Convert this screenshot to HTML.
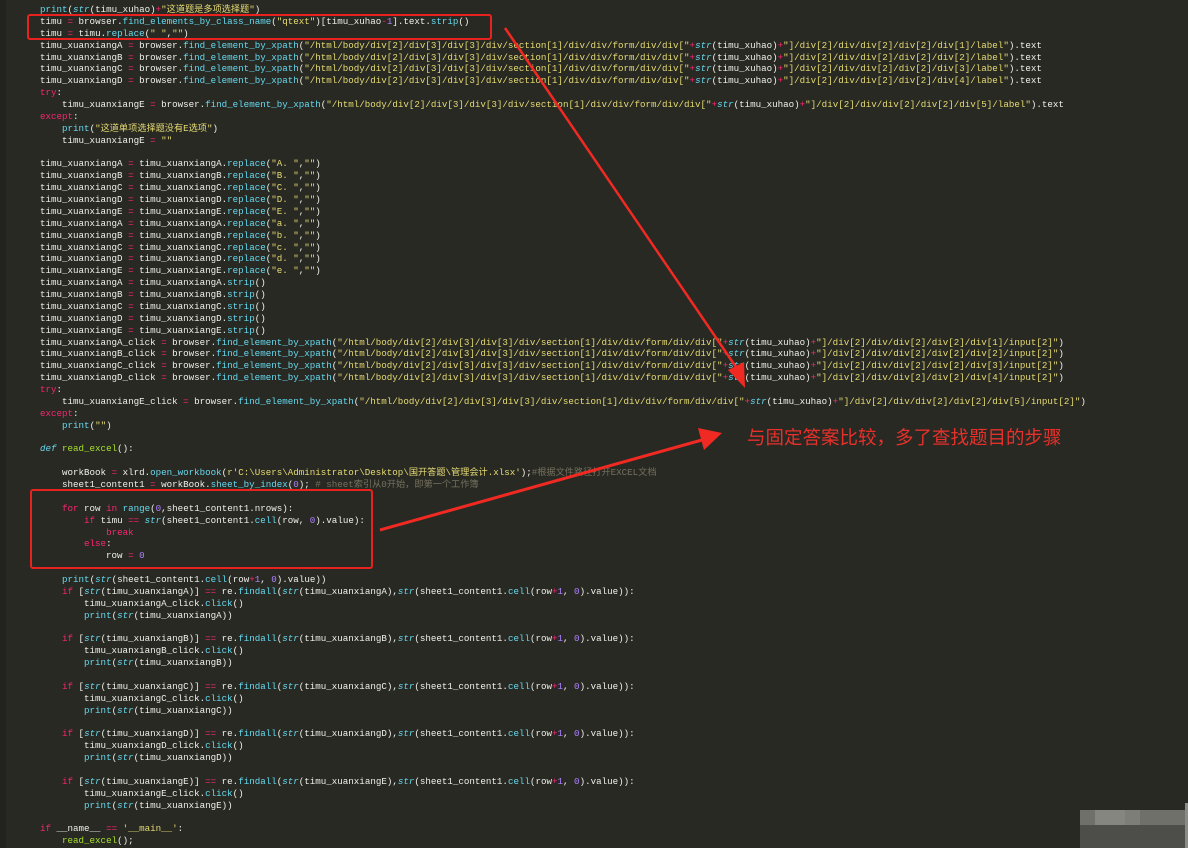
<!DOCTYPE html>
<html><head><meta charset="utf-8"><style>
html,body{margin:0;padding:0;background:#282923;width:1188px;height:848px;overflow:hidden;position:relative}
pre{position:absolute;left:40px;top:4px;margin:0;font-family:"Liberation Mono","Noto Sans CJK SC",monospace;font-size:9.18px;line-height:11.88px;color:#f0f0ea;white-space:pre}
.k{color:#f92672}.f{color:#66d9ef}.s{color:#e6db74}.n{color:#ae81ff}.b{color:#66d9ef;font-style:italic}.g{color:#a6e22e}.c{color:#75715e}
.box{position:absolute;border:2px solid #e8231f;border-radius:3px}
.note{position:absolute;left:747px;top:424px;font-family:"Noto Sans CJK SC",sans-serif;font-size:18.5px;color:#e8302b;white-space:nowrap}
.gut{position:absolute;left:0;top:0;width:6px;height:848px;background:#222320}
</style></head><body>
<div class="gut"></div>
<pre><span class="f">print</span>(<span class="b">str</span>(timu_xuhao)<span class="k">+</span><span class="s">"这道题是多项选择题"</span>)
timu <span class="k">=</span> browser.<span class="f">find_elements_by_class_name</span>(<span class="s">"qtext"</span>)[timu_xuhao<span class="k">-</span><span class="n">1</span>].text.<span class="f">strip</span>()
timu <span class="k">=</span> timu.<span class="f">replace</span>(<span class="s">" "</span>,<span class="s">""</span>)
timu_xuanxiangA <span class="k">=</span> browser.<span class="f">find_element_by_xpath</span>(<span class="s">"/html/body/div[2]/div[3]/div[3]/div/section[1]/div/div/form/div/div["</span><span class="k">+</span><span class="b">str</span>(timu_xuhao)<span class="k">+</span><span class="s">"]/div[2]/div/div[2]/div[2]/div[1]/label"</span>).text
timu_xuanxiangB <span class="k">=</span> browser.<span class="f">find_element_by_xpath</span>(<span class="s">"/html/body/div[2]/div[3]/div[3]/div/section[1]/div/div/form/div/div["</span><span class="k">+</span><span class="b">str</span>(timu_xuhao)<span class="k">+</span><span class="s">"]/div[2]/div/div[2]/div[2]/div[2]/label"</span>).text
timu_xuanxiangC <span class="k">=</span> browser.<span class="f">find_element_by_xpath</span>(<span class="s">"/html/body/div[2]/div[3]/div[3]/div/section[1]/div/div/form/div/div["</span><span class="k">+</span><span class="b">str</span>(timu_xuhao)<span class="k">+</span><span class="s">"]/div[2]/div/div[2]/div[2]/div[3]/label"</span>).text
timu_xuanxiangD <span class="k">=</span> browser.<span class="f">find_element_by_xpath</span>(<span class="s">"/html/body/div[2]/div[3]/div[3]/div/section[1]/div/div/form/div/div["</span><span class="k">+</span><span class="b">str</span>(timu_xuhao)<span class="k">+</span><span class="s">"]/div[2]/div/div[2]/div[2]/div[4]/label"</span>).text
<span class="k">try</span>:
    timu_xuanxiangE <span class="k">=</span> browser.<span class="f">find_element_by_xpath</span>(<span class="s">"/html/body/div[2]/div[3]/div[3]/div/section[1]/div/div/form/div/div["</span><span class="k">+</span><span class="b">str</span>(timu_xuhao)<span class="k">+</span><span class="s">"]/div[2]/div/div[2]/div[2]/div[5]/label"</span>).text
<span class="k">except</span>:
    <span class="f">print</span>(<span class="s">"这道单项选择题没有E选项"</span>)
    timu_xuanxiangE <span class="k">=</span> <span class="s">""</span>

timu_xuanxiangA <span class="k">=</span> timu_xuanxiangA.<span class="f">replace</span>(<span class="s">"A. "</span>,<span class="s">""</span>)
timu_xuanxiangB <span class="k">=</span> timu_xuanxiangB.<span class="f">replace</span>(<span class="s">"B. "</span>,<span class="s">""</span>)
timu_xuanxiangC <span class="k">=</span> timu_xuanxiangC.<span class="f">replace</span>(<span class="s">"C. "</span>,<span class="s">""</span>)
timu_xuanxiangD <span class="k">=</span> timu_xuanxiangD.<span class="f">replace</span>(<span class="s">"D. "</span>,<span class="s">""</span>)
timu_xuanxiangE <span class="k">=</span> timu_xuanxiangE.<span class="f">replace</span>(<span class="s">"E. "</span>,<span class="s">""</span>)
timu_xuanxiangA <span class="k">=</span> timu_xuanxiangA.<span class="f">replace</span>(<span class="s">"a. "</span>,<span class="s">""</span>)
timu_xuanxiangB <span class="k">=</span> timu_xuanxiangB.<span class="f">replace</span>(<span class="s">"b. "</span>,<span class="s">""</span>)
timu_xuanxiangC <span class="k">=</span> timu_xuanxiangC.<span class="f">replace</span>(<span class="s">"c. "</span>,<span class="s">""</span>)
timu_xuanxiangD <span class="k">=</span> timu_xuanxiangD.<span class="f">replace</span>(<span class="s">"d. "</span>,<span class="s">""</span>)
timu_xuanxiangE <span class="k">=</span> timu_xuanxiangE.<span class="f">replace</span>(<span class="s">"e. "</span>,<span class="s">""</span>)
timu_xuanxiangA <span class="k">=</span> timu_xuanxiangA.<span class="f">strip</span>()
timu_xuanxiangB <span class="k">=</span> timu_xuanxiangB.<span class="f">strip</span>()
timu_xuanxiangC <span class="k">=</span> timu_xuanxiangC.<span class="f">strip</span>()
timu_xuanxiangD <span class="k">=</span> timu_xuanxiangD.<span class="f">strip</span>()
timu_xuanxiangE <span class="k">=</span> timu_xuanxiangE.<span class="f">strip</span>()
timu_xuanxiangA_click <span class="k">=</span> browser.<span class="f">find_element_by_xpath</span>(<span class="s">"/html/body/div[2]/div[3]/div[3]/div/section[1]/div/div/form/div/div["</span><span class="k">+</span><span class="b">str</span>(timu_xuhao)<span class="k">+</span><span class="s">"]/div[2]/div/div[2]/div[2]/div[1]/input[2]"</span>)
timu_xuanxiangB_click <span class="k">=</span> browser.<span class="f">find_element_by_xpath</span>(<span class="s">"/html/body/div[2]/div[3]/div[3]/div/section[1]/div/div/form/div/div["</span><span class="k">+</span><span class="b">str</span>(timu_xuhao)<span class="k">+</span><span class="s">"]/div[2]/div/div[2]/div[2]/div[2]/input[2]"</span>)
timu_xuanxiangC_click <span class="k">=</span> browser.<span class="f">find_element_by_xpath</span>(<span class="s">"/html/body/div[2]/div[3]/div[3]/div/section[1]/div/div/form/div/div["</span><span class="k">+</span><span class="b">str</span>(timu_xuhao)<span class="k">+</span><span class="s">"]/div[2]/div/div[2]/div[2]/div[3]/input[2]"</span>)
timu_xuanxiangD_click <span class="k">=</span> browser.<span class="f">find_element_by_xpath</span>(<span class="s">"/html/body/div[2]/div[3]/div[3]/div/section[1]/div/div/form/div/div["</span><span class="k">+</span><span class="b">str</span>(timu_xuhao)<span class="k">+</span><span class="s">"]/div[2]/div/div[2]/div[2]/div[4]/input[2]"</span>)
<span class="k">try</span>:
    timu_xuanxiangE_click <span class="k">=</span> browser.<span class="f">find_element_by_xpath</span>(<span class="s">"/html/body/div[2]/div[3]/div[3]/div/section[1]/div/div/form/div/div["</span><span class="k">+</span><span class="b">str</span>(timu_xuhao)<span class="k">+</span><span class="s">"]/div[2]/div/div[2]/div[2]/div[5]/input[2]"</span>)
<span class="k">except</span>:
    <span class="f">print</span>(<span class="s">""</span>)

<span class="b">def</span> <span class="g">read_excel</span>():

    workBook <span class="k">=</span> xlrd.<span class="f">open_workbook</span>(<span class="s">r'C:\Users\Administrator\Desktop\国开答题\管理会计.xlsx'</span>);<span class="c">#根据文件路径打开EXCEL文档</span>
    sheet1_content1 <span class="k">=</span> workBook.<span class="f">sheet_by_index</span>(<span class="n">0</span>); <span class="c"># sheet索引从0开始，即第一个工作簿</span>

    <span class="k">for</span> row <span class="k">in</span> <span class="f">range</span>(<span class="n">0</span>,sheet1_content1.nrows):
        <span class="k">if</span> timu <span class="k">==</span> <span class="b">str</span>(sheet1_content1.<span class="f">cell</span>(row, <span class="n">0</span>).value):
            <span class="k">break</span>
        <span class="k">else</span>:
            row <span class="k">=</span> <span class="n">0</span>

    <span class="f">print</span>(<span class="b">str</span>(sheet1_content1.<span class="f">cell</span>(row<span class="k">+</span><span class="n">1</span>, <span class="n">0</span>).value))
    <span class="k">if</span> [<span class="b">str</span>(timu_xuanxiangA)] <span class="k">==</span> re.<span class="f">findall</span>(<span class="b">str</span>(timu_xuanxiangA),<span class="b">str</span>(sheet1_content1.<span class="f">cell</span>(row<span class="k">+</span><span class="n">1</span>, <span class="n">0</span>).value)):
        timu_xuanxiangA_click.<span class="f">click</span>()
        <span class="f">print</span>(<span class="b">str</span>(timu_xuanxiangA))

    <span class="k">if</span> [<span class="b">str</span>(timu_xuanxiangB)] <span class="k">==</span> re.<span class="f">findall</span>(<span class="b">str</span>(timu_xuanxiangB),<span class="b">str</span>(sheet1_content1.<span class="f">cell</span>(row<span class="k">+</span><span class="n">1</span>, <span class="n">0</span>).value)):
        timu_xuanxiangB_click.<span class="f">click</span>()
        <span class="f">print</span>(<span class="b">str</span>(timu_xuanxiangB))

    <span class="k">if</span> [<span class="b">str</span>(timu_xuanxiangC)] <span class="k">==</span> re.<span class="f">findall</span>(<span class="b">str</span>(timu_xuanxiangC),<span class="b">str</span>(sheet1_content1.<span class="f">cell</span>(row<span class="k">+</span><span class="n">1</span>, <span class="n">0</span>).value)):
        timu_xuanxiangC_click.<span class="f">click</span>()
        <span class="f">print</span>(<span class="b">str</span>(timu_xuanxiangC))

    <span class="k">if</span> [<span class="b">str</span>(timu_xuanxiangD)] <span class="k">==</span> re.<span class="f">findall</span>(<span class="b">str</span>(timu_xuanxiangD),<span class="b">str</span>(sheet1_content1.<span class="f">cell</span>(row<span class="k">+</span><span class="n">1</span>, <span class="n">0</span>).value)):
        timu_xuanxiangD_click.<span class="f">click</span>()
        <span class="f">print</span>(<span class="b">str</span>(timu_xuanxiangD))

    <span class="k">if</span> [<span class="b">str</span>(timu_xuanxiangE)] <span class="k">==</span> re.<span class="f">findall</span>(<span class="b">str</span>(timu_xuanxiangE),<span class="b">str</span>(sheet1_content1.<span class="f">cell</span>(row<span class="k">+</span><span class="n">1</span>, <span class="n">0</span>).value)):
        timu_xuanxiangE_click.<span class="f">click</span>()
        <span class="f">print</span>(<span class="b">str</span>(timu_xuanxiangE))

<span class="k">if</span> __name__ <span class="k">==</span> <span class="s">'__main__'</span>:
    <span class="g">read_excel</span>();</pre>
<div class="box" style="left:27px;top:14px;width:461px;height:22px"></div>
<div class="box" style="left:30px;top:489px;width:339px;height:76px"></div>
<svg width="1188" height="848" style="position:absolute;left:0;top:0">
<line x1="505" y1="28" x2="738" y2="370" stroke="#f02a22" stroke-width="2.5"/>
<polygon points="745,388 728,370 744,362" fill="#f02a22"/>
<line x1="380" y1="530" x2="702" y2="440" stroke="#f02a22" stroke-width="3"/>
<polygon points="722,433 698,428 704,450" fill="#f02a22"/>
<rect x="1080" y="810" width="105" height="15" fill="#6f706a"/>
<rect x="1095" y="810" width="30" height="15" fill="#85867f"/>
<rect x="1125" y="810" width="15" height="15" fill="#7d7e77"/>
<rect x="1080" y="825" width="105" height="23" fill="#4d4e49"/>
<rect x="1185" y="803" width="3" height="45" fill="#8a8a86"/>
</svg>
<div class="note">与固定答案比较，多了查找题目的步骤</div>
</body></html>
